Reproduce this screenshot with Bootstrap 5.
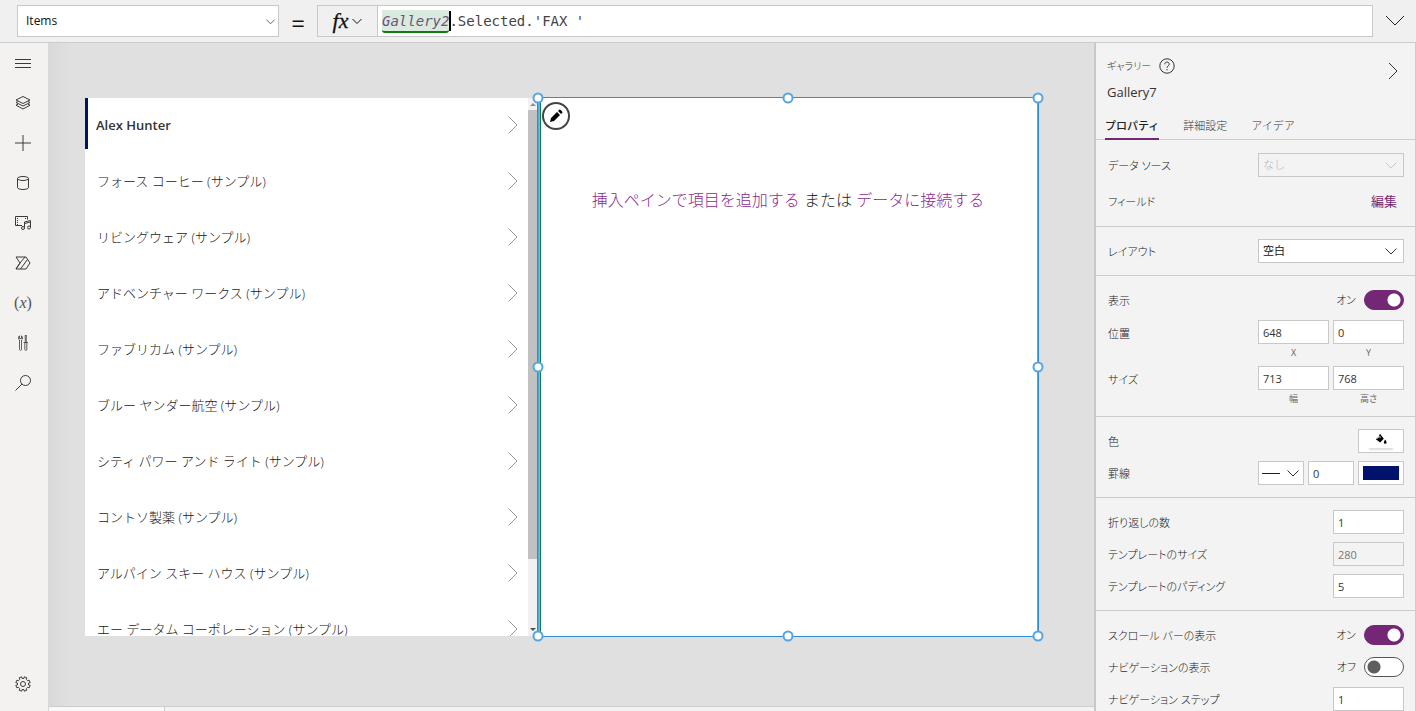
<!DOCTYPE html>
<html lang="ja">
<head>
<meta charset="utf-8">
<meta name="viewport" content="width=device-width, initial-scale=1">
<title>Gallery7</title>
<link href="https://cdn.jsdelivr.net/npm/bootstrap@5.3.0/dist/css/bootstrap.min.css" rel="stylesheet">
<style>
body{font-family:"Open Sans","Noto Sans CJK JP",sans-serif;font-size:12px;line-height:16px;color:#333;background:#f0f0f0}
svg{display:block;fill:none;stroke:currentColor;stroke-width:1}
.topbar{height:43px;background:#f0f0f0;border-bottom:1px solid #ccc;padding-left:17px}
.form-control,.form-select{border:1px solid #c8c8c8;border-radius:0;font-size:11px;line-height:16px;height:24px;padding:0 4px;color:#333;background-color:#fff}
.form-select{background-image:url("data:image/svg+xml,%3Csvg xmlns='http://www.w3.org/2000/svg' viewBox='0 0 12 12' fill='none' stroke='%23333'%3E%3Cpath d='M.5 3.5 6 9l5.5-5.5'/%3E%3C/svg%3E");background-size:12px 12px;background-position:right 6px center;color:#111}
.form-select:disabled{background-color:#f3f3f3;color:#b5b5b5;background-image:url("data:image/svg+xml,%3Csvg xmlns='http://www.w3.org/2000/svg' viewBox='0 0 12 12' fill='none' stroke='%23c8c8c8'%3E%3Cpath d='M.5 3.5 6 9l5.5-5.5'/%3E%3C/svg%3E");font-weight:300}
.form-control:disabled{background:#f3f3f3;color:#777}
.prop-select{width:262px;height:32px;font-size:12px;padding-left:8px;background-size:9px 9px;background-position:right 3px center}
.equals{width:38px;font:24px/32px "Open Sans",sans-serif;color:#111;padding-top:4px}
.fx-btn{width:61px;height:32px;border:1px solid #c8c8c8;border-radius:0;background:#f0f0f0;color:#111}
.fx-btn i{font:italic 22px/24px "Liberation Serif",serif;-webkit-text-stroke:.3px #111}
.formula{height:32px;border:1px solid #c8c8c8;border-left:0;background:#fff;padding-left:4px;font:14px/22px "DejaVu Sans Mono",monospace;color:#444;white-space:pre}
.formula em{background:#d9eade;color:#70517c;border-bottom:2px solid #107c10;border-radius:0 0 3px 3px;height:23px}
.caret{width:2px;height:20px;background:#000;margin-right:-2px}
.expand{width:43px;color:#222}
.rail{width:49px;background:#f3f2f1;border-right:1px solid #d8d8d8;color:#333}
.rail .btn{height:40px;width:46px;border:0;border-radius:0;padding:0;color:#3b3a39}
.rail .variable{font:16px/20px "Liberation Serif",serif;color:#555}
.stage{background:linear-gradient(90deg,#d9d9d9,#e0e0e0 22px)}
.board{padding:55px 56px 70px 36px}
.gallery{flex:453 1 0;background:#fff}
.entries{scrollbar-width:none}
.entry{height:56px;flex:none;padding:0 10px 2px 12px;font-size:13px;line-height:14px;color:#222;text-decoration:none;font-weight:300}
.entry.current{font-weight:600;padding-left:8px;color:#333}
.marker{width:3px;height:51px;background:#00126b}
.entry svg{color:#999}
.scroller{width:10px;background:#f1f1f1;color:#505050}
.scroller svg,.solid{fill:currentColor;stroke:none}
.thumb{flex:449 1 0;background:#c1c1c1}
.rest{flex:65 1 0}
.blank{flex:500 1 0;background:#fff;outline:1px solid #2f8dd6;box-shadow:inset 1px 0 #55a5e2,inset -1px 0 #55a5e2,inset 2px 0 #7fbf9c,inset 3px 0 #0c8043;padding-top:88px;font-size:16px;line-height:28px;font-weight:300;color:#222}
.blank a{color:#8a2a8f;text-decoration:none}
.knob{width:11px;height:11px;background:#fff;border:2px solid #55a5e2;border-radius:50%}
.pencil{left:4px;top:4px;width:28px;height:28px;border:2px solid #444;border-radius:50%;background:#fff;padding:0;color:#000}
.tabstrip{height:5px;background:#f3f3f3;border-top:1px solid #ccc}
.sheet{width:116px;height:4px;background:#f8f8f8;border-right:1px solid #ccc}
.panel{width:322px;background:#f3f3f3;border-left:2px solid #c8c8c8;border-right:1px solid #ccc;font-size:11px;color:#222;font-feature-settings:"palt"}
.panel-head{padding:15px 0 0 11px;color:#333}
.kind{font-size:10px;font-weight:300}
.block-title{font-size:13px;line-height:20px}
.tabs{height:30px;border-bottom:1px solid #ccc;padding-left:9px;gap:24px}
.tabs .nav-link{padding:8px 0 0;height:30px;color:#333;font-size:11px;line-height:16px;font-weight:300;font-feature-settings:normal}
.tabs .nav-link.active{color:#222;font-weight:500;border-bottom:2px solid #742774}
.group{border-bottom:1px solid #ccc;padding:12px 11px 12px 12px;display:flex;flex-direction:column;gap:8px}
.group.first{padding-top:13px;padding-bottom:13px;gap:12px}
.prop{display:flex;height:24px;justify-content:space-between;align-items:center}
.prop.tall{height:38px;align-items:flex-start}
.prop>label,.prop>.caption-text{line-height:24px;padding-top:2px;font-weight:300}
.wide{width:146px}
.num{width:71px}
.narrow{width:46px}
.under{font-size:9px;line-height:12px;padding-top:3px;color:#666;text-align:center;display:block}
.panel .form-switch{padding:0;min-height:0;margin:0;display:flex;align-items:center;gap:8px}
.panel .form-switch .form-check-input{width:40px;height:20px;margin:0;float:none;border:1px solid #555;background:#fff radial-gradient(circle at 9px 9px,#605e5c 6px,transparent 7px)}
.panel .form-switch .form-check-input:checked{border-color:#742774;background:#742774 radial-gradient(circle at 29px 9px,#fff 6px,transparent 7px)}
.swatch{width:46px;height:24px;border:1px solid #c8c8c8;background:#fff;border-radius:0;padding:4px}
.ink{width:36px;height:14px;background:#00126b}
.nofill{width:24px;height:3px;box-shadow:0 2px 2px #ddd}
.edit{color:#742774;font-size:13px;text-decoration:none;margin-right:7px}
.line-pick{background-size:12px 12px;background-position:right 4px center}
.line-wrap::before{content:"";position:absolute;left:4px;top:12px;width:18px;height:1px;background:#222;z-index:1}
</style>
<script src="https://cdn.jsdelivr.net/npm/bootstrap@5.3.0/dist/js/bootstrap.bundle.min.js"></script>
</head>
<body class="vh-100 d-flex flex-column overflow-hidden">
<header class="topbar d-flex align-items-center flex-shrink-0">
  <select class="form-select prop-select" aria-label="プロパティ"><option>Items</option></select>
  <span class="equals text-center">=</span>
  <button class="fx-btn d-flex align-items-center justify-content-center gap-1 flex-shrink-0" aria-label="関数"><i>fx</i><svg width="10" height="10" viewBox="0 0 10 10"><path d="M.5 3 5 7.500 9.500 3"/></svg></button>
  <div class="formula d-flex align-items-center flex-grow-1" role="textbox" contenteditable="true" aria-label="数式" spellcheck="false"><em>Gallery2</em><span class="caret"></span><span>.Selected.'FAX '</span></div>
  <button class="btn expand p-0 d-flex justify-content-center" aria-label="展開"><svg width="20" height="12" viewBox="0 0 20 12" stroke-width="1.500"><path d="m1 1 9 9 9-9"/></svg></button>
</header>
<div class="d-flex flex-grow-1 overflow-hidden">
  <nav class="rail d-flex flex-column flex-shrink-0" aria-label="ツール">
    <button class="btn d-flex align-items-center justify-content-center" aria-label="メニュー"><svg width="16" height="10" viewBox="0 0 16 10"><path d="M0 1.500h16M0 5.500h16M0 9.500h16"/></svg></button>
    <button class="btn d-flex align-items-center justify-content-center" aria-label="ツリー ビュー"><svg width="16" height="16" viewBox="0 0 16 16"><path d="M1 5 8 1.500 15 5 8 8.500zM3 6.500l-2 1L8 11l7-3.500-2-1M3 9.200l-2 1 7 3.800 7-3.800-2-1"/></svg></button>
    <button class="btn d-flex align-items-center justify-content-center" aria-label="挿入"><svg width="16" height="16" viewBox="0 0 16 16"><path d="M8 0v16M0 8h16"/></svg></button>
    <button class="btn d-flex align-items-center justify-content-center" aria-label="データ"><svg width="12" height="14" viewBox="0 0 12 14"><ellipse cx="6" cy="2.500" rx="5.500" ry="2"/><path d="M.5 2.500v9c0 1.200 2.500 2 5.500 2s5.500-.8 5.500-2v-9"/></svg></button>
    <button class="btn d-flex align-items-center justify-content-center" aria-label="メディア"><svg width="17" height="14" viewBox="0 0 17 14"><path d="M7 9.500H.5v-9h12v3M9.500 11.500V6l6-1.500v7M9.500 7.500l6-1.500"/><circle cx="8" cy="12" r="1.500"/><circle cx="14" cy="11.500" r="1.500"/><path d="M2.500 2v7M10.500 2v2" stroke-dasharray="1 1"/></svg></button>
    <button class="btn d-flex align-items-center justify-content-center" aria-label="Power Automate"><svg width="16" height="14" viewBox="0 0 16 14" stroke-width="1.200"><path d="M1 1h10l4 6-4 6H1l4-6zM5 7l5-6M5.500 13 12.500 3.500M1 13l4-6"/></svg></button>
    <button class="btn variable d-flex align-items-center justify-content-center" aria-label="変数">(<i>x</i>)</button>
    <button class="btn d-flex align-items-center justify-content-center" aria-label="高度なツール"><svg width="10" height="16" viewBox="0 0 10 16"><path d="M1.500.8C0 2 .2 4.500 1.500 5v9c0 2 2 2 2 0V5C4.800 4.500 5 2 3.500.8V3.500h-2zM7 .5h1.500L8.200 4v3.500h-.9V4zM5.500 7.500H10M6.800 8v6c0 2 2 2 2 0V8" stroke-width=".8"/></svg></button>
    <button class="btn d-flex align-items-center justify-content-center" aria-label="検索"><svg width="16" height="16" viewBox="0 0 16 16"><circle cx="10.500" cy="5.500" r="5"/><path d="M7 9 .5 15.500"/></svg></button>
    <button class="btn d-flex align-items-center justify-content-center mt-auto mb-2" aria-label="設定"><svg width="16" height="18" viewBox="0 -2 16 18"><circle cx="8" cy="8" r="2.500"/><path d="m6.700.8.4 1.700h1.800l.4-1.700 2.500 1-.5 1.700 1.200 1.200 1.700-.5 1 2.500-1.700.4v1.800l1.700.4-1 2.500-1.700-.5-1.200 1.200.5 1.700-2.500 1-.4-1.700H7.100l-.4 1.700-2.500-1 .5-1.700-1.200-1.200-1.700.5-1-2.500 1.700-.4V7.100L.8 6.700l1-2.500 1.700.5 1.200-1.200-.5-1.700z"/></svg></button>
  </nav>
  <main class="stage flex-grow-1 d-flex flex-column overflow-hidden">
    <div class="board d-flex flex-grow-1 overflow-hidden">
      <section class="gallery d-flex overflow-hidden" aria-label="Gallery2">
        <div class="entries flex-grow-1 d-flex flex-column overflow-hidden" id="entries">
          <div class="d-flex flex-shrink-0"><span class="marker"></span><a href="#" class="entry current d-flex flex-grow-1 align-items-center justify-content-between">Alex Hunter<svg width="10" height="18" viewBox="0 0 10 18"><path d="m.5.5 8.500 8.500-8.500 8.500"/></svg></a></div>
        </div>
        <div class="scroller d-flex flex-column align-items-center">
          <svg width="10" height="12" viewBox="0 0 10 12"><path d="M2 8h6L5 5z" opacity=".6"/></svg>
          <div class="thumb w-100"></div><div class="rest"></div>
          <svg width="10" height="12" viewBox="0 0 10 12"><path d="M2 4h6L5 7z"/></svg>
        </div>
      </section>
      <section class="blank position-relative text-center" aria-label="Gallery7">
        <button class="pencil position-absolute d-flex align-items-center justify-content-center" aria-label="編集"><svg class="solid" width="14" height="14" viewBox="0 0 14 14"><path d="m1 13 1-4 6-6 3 3-6 6zM9 2l1.500-1.500c.5-.5 3.500 2.500 3 3L12 5z"/></svg></button>
        <a href="#">挿入ペインで項目を追加する</a> または <a href="#">データに接続する</a>
        <span class="knob position-absolute top-0 start-0 translate-middle"></span><span class="knob position-absolute top-0 start-50 translate-middle"></span><span class="knob position-absolute top-0 start-100 translate-middle"></span>
        <span class="knob position-absolute top-50 start-0 translate-middle"></span><span class="knob position-absolute top-50 start-100 translate-middle"></span>
        <span class="knob position-absolute top-100 start-0 translate-middle"></span><span class="knob position-absolute top-100 start-50 translate-middle"></span><span class="knob position-absolute top-100 start-100 translate-middle"></span>
      </section>
    </div>
    <div class="tabstrip flex-shrink-0"><div class="sheet"></div></div>
  </main>
  <aside class="panel flex-shrink-0 overflow-hidden">
    <div class="panel-head d-flex justify-content-between pe-3">
      <div>
        <div class="d-flex align-items-center gap-2"><span class="kind">ギャラリー</span><svg width="16" height="16" viewBox="0 0 16 16"><circle cx="8" cy="8" r="7.200"/><path d="M5.800 6.300c0-3 4.400-3 4.400 0 0 1.700-2.200 1.600-2.200 3.500M8 11v1.300"/></svg></div>
        <div class="block-title mt-2">Gallery7</div>
      </div>
      <svg class="mt-1" width="12" height="18" viewBox="0 0 12 18"><path d="m2 1 8 8-8 8"/></svg>
    </div>
    <nav class="nav tabs mt-2 flex-nowrap">
      <a class="nav-link active" href="#">プロパティ</a><a class="nav-link" href="#">詳細設定</a><a class="nav-link" href="#">アイデア</a>
    </nav>
    <div class="group first">
      <div class="prop"><label for="source">データ ソース</label><select id="source" class="form-select wide" disabled><option>なし</option></select></div>
      <div class="prop"><span class="caption-text">フィールド</span><a class="edit" href="#">編集</a></div>
    </div>
    <div class="group">
      <div class="prop"><label for="layout">レイアウト</label><select id="layout" class="form-select wide"><option>空白</option></select></div>
    </div>
    <div class="group">
      <div class="prop"><label for="visible">表示</label><div class="form-switch"><span class="fw-light">オン</span><input id="visible" class="form-check-input" type="checkbox" role="switch" checked></div></div>
      <div class="prop tall"><span class="caption-text">位置</span><div class="d-flex gap-1"><div><input id="px" class="form-control num" value="648"><label class="under" for="px">X</label></div><div><input id="py" class="form-control num" value="0"><label class="under" for="py">Y</label></div></div></div>
      <div class="prop tall"><span class="caption-text">サイズ</span><div class="d-flex gap-1"><div><input id="sw" class="form-control num" value="713"><label class="under" for="sw">幅</label></div><div><input id="sh" class="form-control num" value="768"><label class="under" for="sh">高さ</label></div></div></div>
    </div>
    <div class="group">
      <div class="prop"><label for="fill">色</label><button id="fill" class="swatch d-flex flex-column align-items-center"><svg class="solid" width="14" height="12" viewBox="0 0 14 12"><path d="M6 0 7.500 2 10 5 6 9 1.500 5.500 5 2.500V1zM11.500 6c2 3 2 4.500 0 4.500s-2-1.500 0-4.500z"/><path d="M6 2.500v2M3 5l2.500-2.500" stroke="#fff" stroke-width=".8"/></svg><span class="nofill"></span></button></div>
      <div class="prop"><label for="linestyle">罫線</label><div class="d-flex gap-1"><div class="line-wrap position-relative"><select id="linestyle" class="form-select line-pick narrow"><option aria-label="実線"></option></select></div><input class="form-control narrow" aria-label="罫線の太さ" value="0"><button class="swatch" aria-label="罫線の色"><span class="ink d-block"></span></button></div></div>
    </div>
    <div class="group">
      <div class="prop"><label for="wrap">折り返しの数</label><input id="wrap" class="form-control num" value="1"></div>
      <div class="prop"><label for="tsize">テンプレートのサイズ</label><input id="tsize" class="form-control num" value="280" disabled></div>
      <div class="prop"><label for="tpad">テンプレートのパディング</label><input id="tpad" class="form-control num" value="5"></div>
    </div>
    <div class="group">
      <div class="prop"><label for="bar">スクロール バーの表示</label><div class="form-switch"><span class="fw-light">オン</span><input id="bar" class="form-check-input" type="checkbox" role="switch" checked></div></div>
      <div class="prop"><label for="navi">ナビゲーションの表示</label><div class="form-switch"><span class="fw-light">オフ</span><input id="navi" class="form-check-input" type="checkbox" role="switch"></div></div>
      <div class="prop"><label for="step">ナビゲーション ステップ</label><input id="step" class="form-control num" value="1"></div>
    </div>
  </aside>
</div>
<script>
const names = ["フォース コーヒー","リビングウェア","アドベンチャー ワークス","ファブリカム","ブルー ヤンダー航空","シティ パワー アンド ライト","コントソ製薬","アルパイン スキー ハウス","エー データム コーポレーション"];
document.getElementById("entries").insertAdjacentHTML("beforeend", names.map(n =>
  `<a href="#" class="entry d-flex align-items-center justify-content-between">${n} (サンプル)<svg width="10" height="18" viewBox="0 0 10 18"><path d="m.5.5 8.500 8.500-8.500 8.500"/></svg></a>`).join(""));
</script>
</body>
</html>
